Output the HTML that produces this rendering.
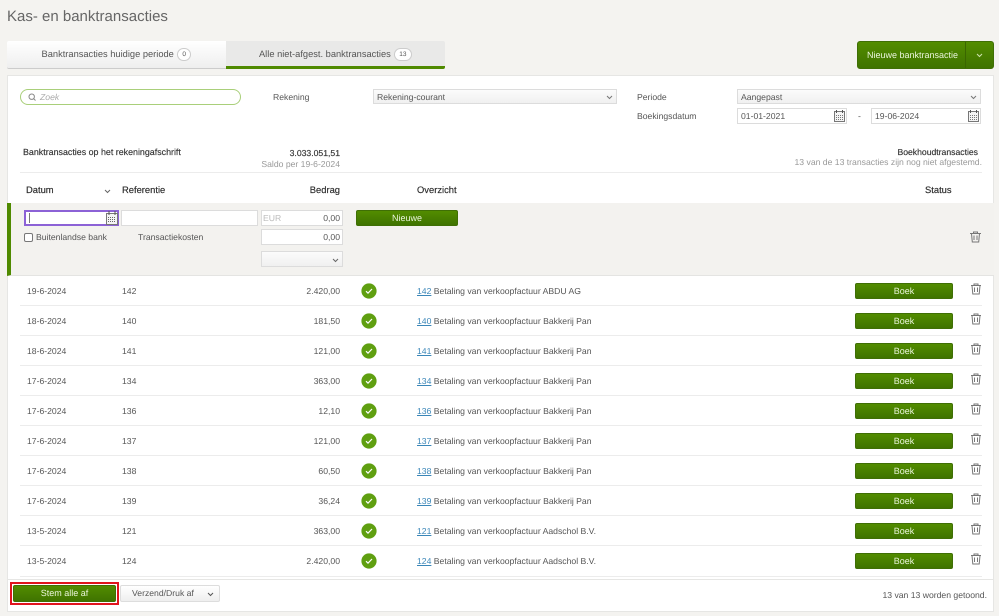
<!DOCTYPE html>
<html><head><meta charset="utf-8">
<style>
*{box-sizing:border-box}
html,body{margin:0;padding:0}
body{width:999px;height:616px;position:relative;overflow:hidden;background:#f4f3f0;font-family:"Liberation Sans",sans-serif;font-size:8.65px;color:#555;text-rendering:geometricPrecision;filter:blur(.25px)}
.a{position:absolute;white-space:nowrap}
.t{position:absolute;white-space:nowrap;line-height:12px;height:12px}
.r{text-align:right}
.b{color:#333}
.h{color:#2b2b2b;font-size:9.4px;-webkit-text-stroke:.15px #2b2b2b}
.btn{position:absolute;background:linear-gradient(#528c00,#3f7300);border:1px solid #3f6f05;border-radius:2px;color:#eaf5da;text-align:center;white-space:nowrap;font-size:9px}
.inp{position:absolute;background:#fff;border:1px solid #dcdcdc}
.sel{position:absolute;background:linear-gradient(#fbfbfb,#f0f0f0);border:1px solid #dcdcdc;line-height:14px;padding-left:3px;color:#555}
.line{position:absolute;height:1px;background:#ececec;left:20px;width:962px}
.badge{display:inline-block;border:1px solid #ccc;border-radius:7px;background:#fff;font-size:6.5px;padding:0 4.500px;line-height:11px;margin-left:3px;vertical-align:middle}
a{color:#3a86b8;text-decoration:underline}
svg{position:absolute;overflow:visible}
</style></head><body>
<div class="a" style="left:7px;top:6px;font-size:15px;line-height:22px;color:#666">Kas- en banktransacties</div>

<div class="a" style="left:7px;top:41px;width:219px;height:28px;background:linear-gradient(#fff,#eee);border-bottom:1px solid #ccc;border-radius:2px 0 0 2px;text-align:center;line-height:27px;font-size:9.3px">Banktransacties huidige periode<span class="badge">0</span></div>
<div class="a" style="left:226px;top:41px;width:219px;height:28px;background:#e9e9e8;border-bottom:3px solid #4f8a00;border-radius:0 2px 2px 0;text-align:center;line-height:27px;font-size:9.3px">Alle niet-afgest. banktransacties<span class="badge">13</span></div>

<div class="btn" style="left:857px;top:41px;width:137px;height:28px;line-height:26px;text-align:left;padding-left:9px;border-radius:3px">Nieuwe banktransactie</div>
<div class="a" style="left:965px;top:42px;width:1px;height:26px;background:#3a6600"></div>
<svg style="left:976px;top:53px" width="8" height="5"><path d="M1 1L3.500 3.500L6 1" fill="none" stroke="#cfe3ae" stroke-width="1"/></svg>

<div class="a" style="left:7px;top:75px;width:987px;height:537px;background:#fff;border:1px solid #e6e6e4"></div>

<div class="a" style="left:20px;top:89px;width:221px;height:16px;border:1px solid #a9cf7a;border-radius:8px;background:#fff"></div>
<svg style="left:28px;top:93px" width="9" height="9"><circle cx="3.700" cy="3.700" r="2.700" fill="none" stroke="#888"/><path d="M5.700 5.700L7.500 7.500" stroke="#888"/></svg>
<div class="t" style="left:40px;top:91px;font-style:italic;color:#aaa">Zoek</div>

<div class="t" style="left:273px;top:91px">Rekening</div>
<div class="sel" style="left:373px;top:89px;width:244px;height:15px">Rekening-courant</div>
<svg style="left:606px;top:95px" width="8" height="5"><path d="M1 1L3.500 3.500L6 1" fill="none" stroke="#777"/></svg>
<div class="t" style="left:637px;top:91px">Periode</div>
<div class="sel" style="left:737px;top:89px;width:244px;height:15px">Aangepast</div>
<svg style="left:970px;top:95px" width="8" height="5"><path d="M1 1L3.500 3.500L6 1" fill="none" stroke="#777"/></svg>
<div class="t" style="left:637px;top:110px">Boekingsdatum</div>
<div class="inp" style="left:737px;top:108px;width:110px;height:16px;line-height:14px;padding-left:3px">01-01-2021</div>
<div class="t" style="left:858px;top:110px">-</div>
<div class="inp" style="left:871px;top:108px;width:110px;height:16px;line-height:14px;padding-left:3px">19-06-2024</div>
<svg style="left:834px;top:110px" width="11" height="12"><rect x=".5" y="1.500" width="10" height="10" fill="#f4f4f4" stroke="#777"/><path d="M2.500 0v3M8.500 0v3" stroke="#555"/><path d="M2 5.500h7M2 7.500h7M2 9.500h7" stroke="#777" stroke-dasharray="1 1"/></svg>
<svg style="left:968px;top:110px" width="11" height="12"><rect x=".5" y="1.500" width="10" height="10" fill="#f4f4f4" stroke="#777"/><path d="M2.500 0v3M8.500 0v3" stroke="#555"/><path d="M2 5.500h7M2 7.500h7M2 9.500h7" stroke="#777" stroke-dasharray="1 1"/></svg>

<div class="t b" style="left:23px;top:146px;-webkit-text-stroke:.15px #333;font-size:8.9px">Banktransacties op het rekeningafschrift</div>
<div class="t b r" style="right:659px;top:147px;-webkit-text-stroke:.15px #333">3.033.051,51</div>
<div class="t r" style="right:659px;top:158px;color:#999">Saldo per 19-6-2024</div>
<div class="t b r" style="right:21px;top:146px;-webkit-text-stroke:.15px #333">Boekhoudtransacties</div>
<div class="t r" style="right:17px;top:156px;color:#999">13 van de 13 transacties zijn nog niet afgestemd.</div>
<div class="line" style="top:172px"></div>

<div class="t h" style="left:26px;top:184px">Datum</div>
<svg style="left:104px;top:189px" width="8" height="5"><path d="M1 1L3.500 3.500L6 1" fill="none" stroke="#666"/></svg>
<div class="t h" style="left:122px;top:184px">Referentie</div>
<div class="t h r" style="right:659px;top:184px">Bedrag</div>
<div class="t h" style="left:417px;top:184px">Overzicht</div>
<div class="t h" style="left:925px;top:184px">Status</div>

<div class="a" style="left:7px;top:203px;width:987px;height:73px;background:#f3f2ef;border-left:4px solid #4f8a00;border-bottom:1px solid #e4e4e2"></div>
<div class="a" style="left:24px;top:210px;width:95px;height:16px;background:#fff;border:2px solid #8c62d6"></div>
<div class="a" style="left:29px;top:213px;width:1px;height:10px;background:#777"></div>
<svg style="left:106px;top:211px" width="12" height="14"><rect x=".5" y="2.500" width="11" height="11" fill="#f4f4f4" stroke="#777"/><path d="M3 0v4M9 0v4" stroke="#555"/><path d="M2 6.500h8M2 8.500h8M2 10.500h8" stroke="#666" stroke-dasharray="1 1"/></svg>
<div class="inp" style="left:121px;top:210px;width:137px;height:16px"></div>
<div class="inp" style="left:261px;top:210px;width:82px;height:16px;line-height:15px;text-align:right;padding-right:2px">0,00</div>
<div class="t" style="left:263px;top:212px;color:#bbb">EUR</div>
<div class="inp" style="left:261px;top:229px;width:82px;height:16px;line-height:14px;text-align:right;padding-right:2px">0,00</div>
<div class="sel" style="left:261px;top:251px;width:82px;height:16px"></div>
<svg style="left:332px;top:258px" width="8" height="5"><path d="M1 1L3.500 3.500L6 1" fill="none" stroke="#666"/></svg>
<div class="btn" style="left:356px;top:210px;width:102px;height:16px;line-height:14px">Nieuwe</div>
<div class="a" style="left:24px;top:233px;width:9px;height:9px;background:#fff;border:1px solid #777;border-radius:2px"></div>
<div class="t" style="left:36px;top:231px">Buitenlandse bank</div>
<div class="t" style="left:138px;top:231px">Transactiekosten</div>
<svg style="left:970px;top:231px" width="11" height="12" viewBox="0 0 11 12"><path d="M0 2.500h11M3.500 2.500V1h4v1.500M1.500 2.500l.8 8.500h6.400l.8-8.500M4 4.500v4.500M7 4.500v4.500" fill="none" stroke="#777"/></svg>

<!-- rows -->
<div class="t" style="left:27px;top:285px">19-6-2024</div><div class="t" style="left:122px;top:285px">142</div><div class="t r" style="right:659px;top:285px">2.420,00</div>
<div class="t" style="left:417px;top:285px"><a>142</a> Betaling van verkoopfactuur ABDU AG</div>
<div class="btn" style="left:855px;top:283px;width:98px;height:16px;line-height:14px">Boek</div>
<div class="line" style="top:305px"></div>

<div class="t" style="left:27px;top:315px">18-6-2024</div><div class="t" style="left:122px;top:315px">140</div><div class="t r" style="right:659px;top:315px">181,50</div>
<div class="t" style="left:417px;top:315px"><a>140</a> Betaling van verkoopfactuur Bakkerij Pan</div>
<div class="btn" style="left:855px;top:313px;width:98px;height:16px;line-height:14px">Boek</div>
<div class="line" style="top:335px"></div>

<div class="t" style="left:27px;top:345px">18-6-2024</div><div class="t" style="left:122px;top:345px">141</div><div class="t r" style="right:659px;top:345px">121,00</div>
<div class="t" style="left:417px;top:345px"><a>141</a> Betaling van verkoopfactuur Bakkerij Pan</div>
<div class="btn" style="left:855px;top:343px;width:98px;height:16px;line-height:14px">Boek</div>
<div class="line" style="top:365px"></div>

<div class="t" style="left:27px;top:375px">17-6-2024</div><div class="t" style="left:122px;top:375px">134</div><div class="t r" style="right:659px;top:375px">363,00</div>
<div class="t" style="left:417px;top:375px"><a>134</a> Betaling van verkoopfactuur Bakkerij Pan</div>
<div class="btn" style="left:855px;top:373px;width:98px;height:16px;line-height:14px">Boek</div>
<div class="line" style="top:395px"></div>

<div class="t" style="left:27px;top:405px">17-6-2024</div><div class="t" style="left:122px;top:405px">136</div><div class="t r" style="right:659px;top:405px">12,10</div>
<div class="t" style="left:417px;top:405px"><a>136</a> Betaling van verkoopfactuur Bakkerij Pan</div>
<div class="btn" style="left:855px;top:403px;width:98px;height:16px;line-height:14px">Boek</div>
<div class="line" style="top:425px"></div>

<div class="t" style="left:27px;top:435px">17-6-2024</div><div class="t" style="left:122px;top:435px">137</div><div class="t r" style="right:659px;top:435px">121,00</div>
<div class="t" style="left:417px;top:435px"><a>137</a> Betaling van verkoopfactuur Bakkerij Pan</div>
<div class="btn" style="left:855px;top:433px;width:98px;height:16px;line-height:14px">Boek</div>
<div class="line" style="top:455px"></div>

<div class="t" style="left:27px;top:465px">17-6-2024</div><div class="t" style="left:122px;top:465px">138</div><div class="t r" style="right:659px;top:465px">60,50</div>
<div class="t" style="left:417px;top:465px"><a>138</a> Betaling van verkoopfactuur Bakkerij Pan</div>
<div class="btn" style="left:855px;top:463px;width:98px;height:16px;line-height:14px">Boek</div>
<div class="line" style="top:485px"></div>

<div class="t" style="left:27px;top:495px">17-6-2024</div><div class="t" style="left:122px;top:495px">139</div><div class="t r" style="right:659px;top:495px">36,24</div>
<div class="t" style="left:417px;top:495px"><a>139</a> Betaling van verkoopfactuur Bakkerij Pan</div>
<div class="btn" style="left:855px;top:493px;width:98px;height:16px;line-height:14px">Boek</div>
<div class="line" style="top:515px"></div>

<div class="t" style="left:27px;top:525px">13-5-2024</div><div class="t" style="left:122px;top:525px">121</div><div class="t r" style="right:659px;top:525px">363,00</div>
<div class="t" style="left:417px;top:525px"><a>121</a> Betaling van verkoopfactuur Aadschol B.V.</div>
<div class="btn" style="left:855px;top:523px;width:98px;height:16px;line-height:14px">Boek</div>
<div class="line" style="top:545px"></div>

<div class="t" style="left:27px;top:555px">13-5-2024</div><div class="t" style="left:122px;top:555px">124</div><div class="t r" style="right:659px;top:555px">2.420,00</div>
<div class="t" style="left:417px;top:555px"><a>124</a> Betaling van verkoopfactuur Aadschol B.V.</div>
<div class="btn" style="left:855px;top:553px;width:98px;height:16px;line-height:14px">Boek</div>
<div class="line" style="top:576px"></div>

<svg style="left:0;top:0" width="999" height="616" viewBox="0 0 999 616">
<defs>
<g id="c"><circle cx="0" cy="0" r="7.600" fill="#5f9f10"/><path d="M-3 0.200L-1 2.200L3 -2" fill="none" stroke="#fff" stroke-width="1.200"/></g>
<g id="d"><path d="M-5 -3.500h10M-2 -3.500V-5h4v1.500M-4 -3.500l.8 8.500h6.400l.8-8.500M-1.500 -1.500v4.500M1.500 -1.500v4.500" fill="none" stroke="#777"/></g>
</defs>
<use href="#c" x="369" y="291"/><use href="#c" x="369" y="321"/><use href="#c" x="369" y="351"/><use href="#c" x="369" y="381"/><use href="#c" x="369" y="411"/><use href="#c" x="369" y="441"/><use href="#c" x="369" y="471"/><use href="#c" x="369" y="501"/><use href="#c" x="369" y="531"/><use href="#c" x="369" y="561"/>
<use href="#d" x="976" y="289"/><use href="#d" x="976" y="319"/><use href="#d" x="976" y="349"/><use href="#d" x="976" y="379"/><use href="#d" x="976" y="409"/><use href="#d" x="976" y="439"/><use href="#d" x="976" y="469"/><use href="#d" x="976" y="499"/><use href="#d" x="976" y="529"/><use href="#d" x="976" y="559"/>
</svg>

<div class="a" style="left:7px;top:579px;width:987px;height:1px;background:#e6e6e4"></div>
<div class="a" style="left:10px;top:582px;width:109px;height:23px;border:2px solid #e0141e"></div>
<div class="btn" style="left:13px;top:585px;width:103px;height:17px;line-height:15px">Stem alle af</div>
<div class="a" style="left:120px;top:585px;width:100px;height:17px;background:linear-gradient(#fff,#eee);border:1px solid #ddd;border-radius:2px;line-height:15px;padding-left:11px">Verzend/Druk af</div>
<svg style="left:207px;top:592px" width="8" height="5"><path d="M1 1L3.500 3.500L6 1" fill="none" stroke="#555"/></svg>
<div class="t r" style="right:12px;top:589px">13 van 13 worden getoond.</div>
</body></html>
